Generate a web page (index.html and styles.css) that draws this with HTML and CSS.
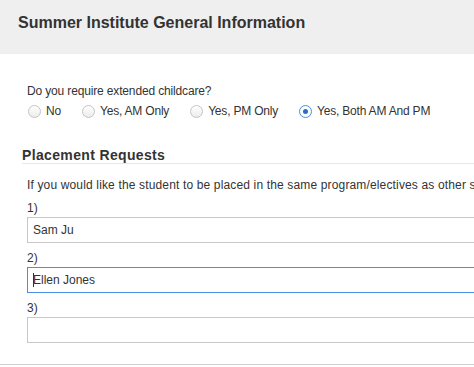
FILE: index.html
```html
<!DOCTYPE html>
<html lang="en">
<head>
<meta charset="utf-8">
<title>Summer Institute General Information</title>
<link rel="stylesheet" href="styles.css">
</head>
<body>
<div class="page">
  <header class="panel-head">
    <h2 class="panel-title">Summer Institute General Information</h2>
  </header>
  <div class="panel-body">
    <div class="field">
      <div class="field-label">Do you require extended childcare?</div>
      <div class="radio-group">
        <label class="radio"><span class="radio-dot"></span>No</label>
        <label class="radio"><span class="radio-dot"></span>Yes, AM Only</label>
        <label class="radio"><span class="radio-dot"></span>Yes, PM Only</label>
        <label class="radio"><span class="radio-dot checked"></span>Yes, Both AM And PM</label>
      </div>
    </div>
    <section class="placement">
      <h3 class="section-title">Placement Requests</h3>
      <p class="help">If you would like the student to be placed in the same program/electives as other students, please list their names below.</p>
      <div class="request">
        <div class="request-num">1)</div>
        <div class="text-input"><input type="text" value="Sam Ju"></div>
      </div>
      <div class="request">
        <div class="request-num">2)</div>
        <div class="text-input focused"><input type="text" value="Ellen Jones"></div>
      </div>
      <div class="request">
        <div class="request-num">3)</div>
        <div class="text-input"><input type="text" value=""></div>
      </div>
    </section>
  </div>
  <div class="panel-foot"></div>
</div>
</body>
</html>
```
FILE: styles.css
```css
html, body {
  margin: 0;
  padding: 0;
  overflow: hidden;
  background: #fff;
}

body {
  font-family: "Liberation Sans", Arial, sans-serif;
  font-size: 12px;
  color: #333;
}

.page {
  width: 720px;
}

.panel-head {
  background: #efefef;
  height: 54px;
  box-sizing: border-box;
  padding: 13px 18px 0;
}

.panel-title {
  margin: 0;
  font-size: 16px;
  line-height: 20px;
  font-weight: bold;
  color: #333;
}

.panel-body {
  padding: 28px 0 0 22px;
}

.field {
  padding-left: 5px;
}

.field-label {
  line-height: 18px;
  letter-spacing: -0.15px;
}

.radio-group {
  display: flex;
  align-items: center;
  gap: 21px;
  height: 18px;
  margin: 2px 0 0 1px;
}

.radio {
  display: flex;
  align-items: center;
  gap: 5px;
  line-height: 18px;
  letter-spacing: -0.2px;
}

.radio-dot {
  width: 11px;
  height: 11px;
  border-radius: 50%;
  border: 1px solid #c4c4c4;
  background: linear-gradient(#ffffff, #ececec);
  display: flex;
  align-items: center;
  justify-content: center;
}

.radio-dot.checked {
  border-color: #4a8fdc;
  background: #fff;
}

.radio-dot.checked::after {
  content: "";
  width: 5px;
  height: 5px;
  border-radius: 50%;
  background: #2a6fc4;
}

.placement {
  margin-top: 27px;
}

.section-title {
  margin: 0;
  font-size: 14px;
  line-height: 16px;
  font-weight: bold;
  letter-spacing: 0.35px;
  color: #333;
  border-bottom: 1px solid #e8e8e8;
}

.help {
  margin: 12px 0 0 5px;
  line-height: 18px;
  letter-spacing: 0.15px;
  white-space: nowrap;
}

.request {
  padding-left: 5px;
}

.request-num {
  line-height: 18px;
  margin-top: 6px;
}

.request:first-of-type .request-num {
  margin-top: 5px;
}

.text-input {
  position: relative;
}

.text-input input {
  display: block;
  box-sizing: border-box;
  width: 600px;
  height: 26px;
  margin: 0;
  padding: 0 5px;
  border: 1px solid #c8c8c8;
  border-radius: 0;
  font-family: "Liberation Sans", Arial, sans-serif;
  font-size: 12px;
  color: #333;
  background: #fff;
  outline: none;
}

.text-input.focused input {
  border-color: #4a8fe0;
}

.text-input.focused::after {
  content: "";
  position: absolute;
  left: 6px;
  top: 6px;
  width: 1px;
  height: 14px;
  background: #333;
}

.panel-foot {
  margin-top: 21px;
  border-top: 1px solid #cfcfcf;
}
```
